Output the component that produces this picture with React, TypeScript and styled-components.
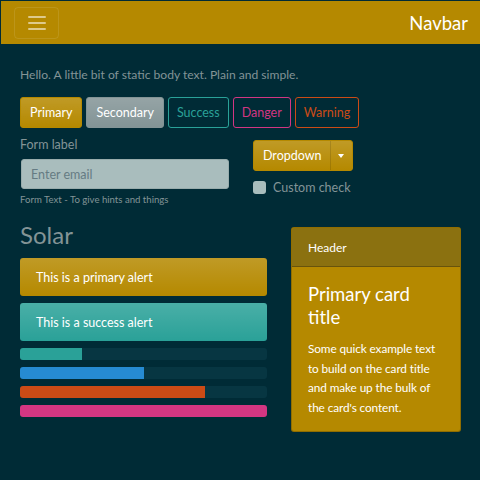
import React from "react";
import styled, { createGlobalStyle } from "styled-components";

const Global = createGlobalStyle`
  html, body { margin: 0; padding: 0; background: #fff; }
  * { box-sizing: border-box; }
`;

const Page = styled.div`
  width: 480px;
  height: 480px;
  background: #002b36;
  padding: 1px 0 0 1px;
  font-family: "Source Sans Pro", Lato, "Open Sans", sans-serif;
  color: #839496;
  font-size: 13px;
  overflow: hidden;
`;

const NavbarBar = styled.nav`
  height: 43px;
  background: #b58900;
  display: flex;
  align-items: center;
  justify-content: space-between;
  padding: 0 12px 0 13px;
`;

const Toggler = styled.button`
  width: 45px;
  height: 32px;
  border: 1px solid rgba(255, 255, 255, 0.1);
  border-radius: 4px;
  background: transparent;
  display: flex;
  align-items: center;
  justify-content: center;
  padding: 0;
`;

const Brand = styled.span`
  color: #fff;
  font-size: 18.5px;
`;

const Content = styled.main`
  padding: 23px 19px 0 19px;
`;

const Lead = styled.p`
  margin: 0 0 14px 0;
  font-size: 12.1px;
  line-height: 16px;
`;

const BtnRow = styled.div`
  display: flex;
  gap: 4px;
`;

type Tone = "primary" | "secondary" | "success" | "danger" | "warning";
const toneColor: Record<Tone, string> = {
  primary: "#b58900",
  secondary: "#839496",
  success: "#2aa198",
  danger: "#d33682",
  warning: "#cb4b16",
};

const Btn = styled.button<{ $tone: Tone; $outline?: boolean }>`
  height: 31px;
  padding: 0 ${(p) => (p.$outline ? "8px" : "9px")};
  font-family: inherit;
  font-size: 12.5px;
  border-radius: 3px;
  border: 1px solid ${(p) => toneColor[p.$tone]};
  color: ${(p) => (p.$outline ? toneColor[p.$tone] : "#fff")};
  background: ${(p) =>
    p.$outline
      ? "transparent"
      : `linear-gradient(180deg, rgba(255,255,255,0.15), rgba(255,255,255,0)) ${toneColor[p.$tone]}`};
`;

const FormRow = styled.div`
  display: flex;
  margin-top: 9px;
`;

const FormCol = styled.div`
  width: 208px;
  display: flex;
  flex-direction: column;
`;

const Label = styled.label`
  font-size: 12.5px;
  line-height: 16px;
  margin-bottom: 6px;
`;

const Input = styled.input`
  margin-left: 1px;
  height: 30px;
  width: 208px;
  background: #a9bdbd;
  border: 1px solid #98acac;
  border-radius: 3px;
  padding: 0 9px;
  font-family: inherit;
  font-size: 12.5px;
  color: #073642;
  &::placeholder { color: #657b83; }
`;

const Hint = styled.small`
  font-size: 9.6px;
  margin-top: 5px;
`;

const SideCol = styled.div`
  margin-left: 25px;
  padding-top: 3px;
  display: flex;
  flex-direction: column;
  align-items: flex-start;
`;

const SplitGroup = styled.div`
  display: flex;
  height: 31px;
  border-radius: 3px;
  overflow: hidden;
  border: 1px solid #b58900;
  background: linear-gradient(180deg, rgba(255,255,255,0.15), rgba(255,255,255,0)) #b58900;
`;

const SplitMain = styled.span`
  color: #fff;
  padding: 0 8px 0 9px;
  display: flex;
  align-items: center;
  font-size: 12.5px;
  border-right: 1px solid rgba(0, 0, 0, 0.12);
`;

const SplitCaret = styled.span`
  width: 21px;
  display: flex;
  align-items: center;
  justify-content: center;
  &::after {
    content: "";
    border-top: 4px solid #fff;
    border-left: 3.5px solid transparent;
    border-right: 3.5px solid transparent;
  }
`;

const CheckRow = styled.label`
  display: flex;
  align-items: center;
  gap: 7px;
  margin-top: 9px;
  font-size: 12.5px;
`;

const CheckBox = styled.span`
  width: 13px;
  height: 13px;
  background: #a9bdbd;
  border-radius: 3px;
`;

const Lower = styled.div`
  display: flex;
  margin-top: 14px;
  gap: 24px;
`;

const LeftCol = styled.div`
  width: 247px;
  display: flex;
  flex-direction: column;
`;

const Heading = styled.h1`
  margin: 2px 0 9px 0;
  font-size: 24px;
  line-height: 28px;
  font-weight: 400;
  color: #839496;
`;

const Alert = styled.div<{ $tone: Tone }>`
  height: 38px;
  border-radius: 3px;
  padding: 0 16px;
  display: flex;
  align-items: center;
  color: #fff;
  font-size: 12.5px;
  margin-bottom: 7px;
  background: linear-gradient(180deg, rgba(255,255,255,0.15), rgba(255,255,255,0)) ${(p) => toneColor[p.$tone]};
`;

const Track = styled.div`
  height: 12px;
  background: #073642;
  border-radius: 3px;
  overflow: hidden;
  margin-bottom: 7px;
`;

const Fill = styled.div<{ $color: string }>`
  height: 100%;
  background: ${(p) => p.$color};
`;

const Card = styled.div`
  margin-top: 8px;
  width: 170px;
  height: 205px;
  background: #b58900;
  border: 1px solid rgba(0, 0, 0, 0.2);
  border-radius: 3px;
  overflow: hidden;
  display: flex;
  flex-direction: column;
`;

const CardHeader = styled.div`
  flex-shrink: 0;
  height: 39px;
  background: #8b7110;
  border-bottom: 1px solid rgba(0, 0, 0, 0.25);
  color: #fff;
  font-size: 12px;
  display: flex;
  align-items: center;
  padding: 0 16px;
`;

const CardBody = styled.div`
  padding: 16px 16px;
  color: #fff;
`;

const CardTitle = styled.h5`
  margin: 0 0 10px 0;
  font-size: 18.5px;
  line-height: 23px;
  font-weight: 400;
`;

const CardText = styled.p`
  margin: 0;
  font-size: 11.8px;
  letter-spacing: -0.1px;
  line-height: 19.5px;
`;

export default function App() {
  return (
    <Page>
      <Global />
      <NavbarBar>
        <Toggler>
          <svg width="22" height="16" viewBox="0 0 22 16">
            <g stroke="rgba(255,255,255,0.55)" strokeWidth="2" strokeLinecap="round">
              <line x1="3" y1="2" x2="19" y2="2" />
              <line x1="3" y1="8" x2="19" y2="8" />
              <line x1="3" y1="14" x2="19" y2="14" />
            </g>
          </svg>
        </Toggler>
        <Brand>Navbar</Brand>
      </NavbarBar>
      <Content>
        <Lead>Hello. A little bit of static body text. Plain and simple.</Lead>
        <BtnRow>
          <Btn $tone="primary">Primary</Btn>
          <Btn $tone="secondary">Secondary</Btn>
          <Btn $tone="success" $outline>Success</Btn>
          <Btn $tone="danger" $outline>Danger</Btn>
          <Btn $tone="warning" $outline>Warning</Btn>
        </BtnRow>
        <FormRow>
          <FormCol>
            <Label>Form label</Label>
            <Input placeholder="Enter email" />
            <Hint>Form Text - To give hints and things</Hint>
          </FormCol>
          <SideCol>
            <SplitGroup>
              <SplitMain>Dropdown</SplitMain>
              <SplitCaret />
            </SplitGroup>
            <CheckRow>
              <CheckBox />
              Custom check
            </CheckRow>
          </SideCol>
        </FormRow>
        <Lower>
          <LeftCol>
            <Heading>Solar</Heading>
            <Alert $tone="primary">This is a primary alert</Alert>
            <Alert $tone="success">This is a success alert</Alert>
            <Track><Fill $color="#2aa198" style={{ width: "25%" }} /></Track>
            <Track><Fill $color="#268bd2" style={{ width: "50%" }} /></Track>
            <Track><Fill $color="#cb4b16" style={{ width: "75%" }} /></Track>
            <Track><Fill $color="#d33682" style={{ width: "100%" }} /></Track>
          </LeftCol>
          <Card>
            <CardHeader>Header</CardHeader>
            <CardBody>
              <CardTitle>Primary card title</CardTitle>
              <CardText>Some quick example text to build on the card title and make up the bulk of the card's content.</CardText>
            </CardBody>
          </Card>
        </Lower>
      </Content>
    </Page>
  );
}
